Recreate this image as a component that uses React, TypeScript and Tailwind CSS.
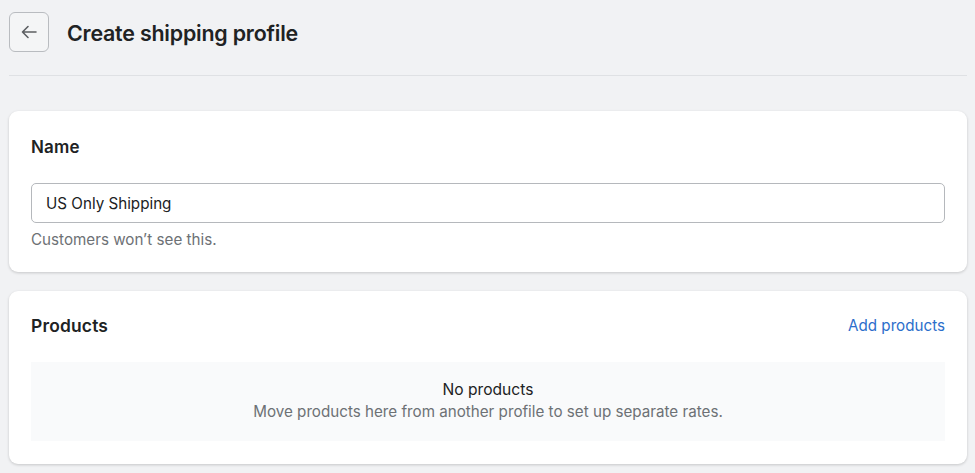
import { useState } from "react";

export default function App() {
  const [name, setName] = useState("US Only Shipping");

  return (
    <div
      className="min-h-screen w-full bg-[#f1f2f4] pl-[9px] pr-[8px] text-[#202223]"
      style={{ fontFamily: "Inter, 'Noto Sans', sans-serif" }}
    >
      {/* header */}
      <div className="flex items-center gap-[18px] pt-[12px] pb-[23px] border-b border-[#dfe1e4]">
        <button className="flex h-[40px] w-[40px] items-center justify-center rounded-[6px] border border-[#b9bcc0] bg-[#f4f5f6] text-[#5c5f62]">
          <svg width="16" height="14" viewBox="0 0 16 14" fill="none" stroke="currentColor" strokeWidth="1.6" strokeLinecap="round" strokeLinejoin="round">
            <path d="M15 7H1.5M7 1.5L1.5 7L7 12.5" />
          </svg>
        </button>
        <h1 className="mt-[3px] text-[21.4px] font-semibold tracking-[-0.2px]">Create shipping profile</h1>
      </div>

      <div className="flex flex-col gap-[19px] pt-[35px]">
        {/* name card */}
        <div className="rounded-[9px] bg-white px-[22px] pt-[25px] pb-[21px] shadow-[0_1px_3px_rgba(0,0,0,0.18)]">
          <h2 className="text-[17px] font-semibold leading-[22px] tracking-[0.2px]">Name</h2>
          <input
            value={name}
            onChange={(e) => setName(e.target.value)}
            className="mt-[25px] block h-[40px] w-full rounded-[5px] border border-[#b5b8bc] px-[14px] text-[15.2px] text-[#202223] outline-none"
          />
          <p className="mt-[6px] text-[15.2px] leading-[22px] text-[#6d7175]">Customers won’t see this.</p>
        </div>

        {/* products card */}
        <div className="rounded-[9px] bg-white px-[22px] pt-[24px] pb-[23px] shadow-[0_1px_3px_rgba(0,0,0,0.18)]">
          <div className="flex items-center justify-between">
            <h2 className="text-[17.4px] font-semibold leading-[22px] tracking-[0.2px]">Products</h2>
            <a href="#" className="text-[15.2px] text-[#2c6ecb]">Add products</a>
          </div>
          <div className="mt-[24px] flex h-[79px] flex-col items-center justify-center bg-[#f9fafb] text-center">
            <p className="text-[15.6px] leading-[22px] text-[#202223]">No products</p>
            <p className="text-[15.2px] leading-[22px] text-[#6d7175]">
              Move products here from another profile to set up separate rates.
            </p>
          </div>
        </div>
      </div>
    </div>
  );
}
